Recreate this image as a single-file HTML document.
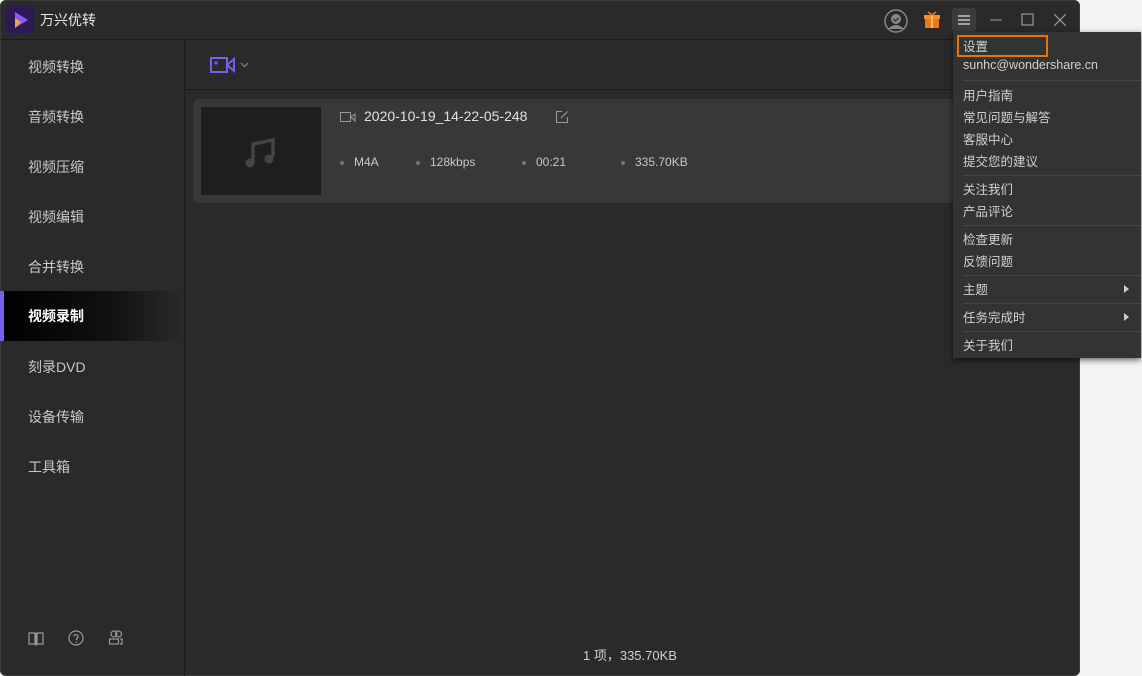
<!DOCTYPE html>
<html><head><meta charset="utf-8"><style>
*{margin:0;padding:0;box-sizing:border-box}
body{width:1142px;height:676px;background:#f4f4f4;font-family:"Liberation Sans","Noto Sans CJK SC",sans-serif;position:relative;overflow:hidden}
.win{position:absolute;left:0;top:0;width:1080px;height:676px;background:#2a2a2a;border-radius:6px;box-shadow:0 0 0 1px #3a3a3a inset;overflow:hidden}
.title{position:absolute;left:0;top:0;width:1080px;height:40px;border-bottom:1px solid #1c1c1c}
.logo{position:absolute;left:6px;top:6px;width:28px;height:28px;border-radius:6px;background:#2d1a55}
.apptitle{position:absolute;left:40px;top:10px;color:#e8e8e8;font-size:14px}
.side{position:absolute;left:0;top:40px;width:185px;height:636px;border-right:1px solid #1c1c1c}
.item{position:absolute;left:0;width:184px;height:50px;line-height:50px;padding-left:28px;color:#c8c8c8;font-size:14px}
.item.act{background:linear-gradient(90deg,#000 0%,#111 60%,#2a2a2a 100%);color:#fff;font-weight:bold}
.item.act:before{content:"";position:absolute;left:0;top:0;width:4px;height:50px;background:#7b5cf0}
.tool{position:absolute;left:185px;top:40px;width:895px;height:50px;border-bottom:1px solid #1c1c1c}
.card{position:absolute;left:193px;top:99px;width:900px;height:104px;background:#383838;border-radius:6px}
.thumb{position:absolute;left:8px;top:8px;width:120px;height:88px;background:#1e1e1e}
.fn{position:absolute;left:171px;top:9px;color:#e0e0e0;font-size:14px}
.meta{position:absolute;top:56px;color:#c8c8c8;font-size:12px}
.meta:before{content:"";position:absolute;left:-14px;top:6px;width:4px;height:4px;border-radius:2px;background:#777}
.status{position:absolute;left:583px;top:647px;color:#d0d0d0;font-size:13px}
.menu{position:absolute;left:953px;top:32px;width:188px;height:326px;background:#333;box-shadow:0 2px 6px rgba(0,0,0,.6)}
.mi{position:absolute;left:10px;color:#d0d0d0;font-size:12.5px}
.sep{position:absolute;left:10px;width:178px;height:1px;background:#454545}
.arr{position:absolute;left:171px;width:0;height:0;border-left:5px solid #ccc;border-top:4px solid transparent;border-bottom:4px solid transparent}
</style></head><body>
<div class="win">
 <div class="title">
  <div class="logo"><svg width="28" height="28"><path d="M9 6 L22 14 L9 22 Z" fill="#8a5cf6"/><path d="M9 12 L15 16 L9 22 Z" fill="#f5a340"/></svg></div>
  <div class="apptitle">万兴优转</div>
  <svg style="position:absolute;left:884px;top:9px" width="24" height="24"><circle cx="12" cy="12" r="11" fill="none" stroke="#888" stroke-width="1.5"/><circle cx="12" cy="10" r="5" fill="#888"/><path d="M4 20 Q12 12 20 20" fill="#888"/><path d="M9.5 10 l2 2 l3-3" stroke="#2a2a2a" stroke-width="1.3" fill="none"/></svg>
  <svg style="position:absolute;left:924px;top:11px" width="16" height="18"><rect x="1" y="6" width="14" height="11" fill="#f07818"/><rect x="0" y="4" width="16" height="4" fill="#f59030"/><rect x="7" y="4" width="2" height="13" fill="#ffc040"/><path d="M4 1 L8 4 L12 1" stroke="#f07818" stroke-width="1.5" fill="none"/></svg>
  <div style="position:absolute;left:952px;top:8px;width:24px;height:24px;background:#3c3c3c;border-radius:3px"></div>
  <svg style="position:absolute;left:957px;top:13px" width="14" height="14"><path d="M1 3h12M1 7h12M1 11h12" stroke="#ddd" stroke-width="1.3"/></svg>
  <svg style="position:absolute;left:990px;top:14px" width="12" height="12"><path d="M0 6h12" stroke="#999" stroke-width="1"/></svg>
  <svg style="position:absolute;left:1021px;top:13px" width="13" height="13"><rect x="1" y="1" width="11" height="11" fill="none" stroke="#999" stroke-width="1.2"/></svg>
  <svg style="position:absolute;left:1054px;top:14px" width="12" height="12"><path d="M0 0L12 12M12 0L0 12" stroke="#999" stroke-width="1.2"/></svg>
 </div>
 <div class="side">
  <div class="item" style="top:2px">视频转换</div>
  <div class="item" style="top:52px">音频转换</div>
  <div class="item" style="top:102px">视频压缩</div>
  <div class="item" style="top:152px">视频编辑</div>
  <div class="item" style="top:202px">合并转换</div>
  <div class="item act" style="top:251px">视频录制</div>
  <div class="item" style="top:302px">刻录DVD</div>
  <div class="item" style="top:352px">设备传输</div>
  <div class="item" style="top:402px">工具箱</div>
  <svg style="position:absolute;left:28px;top:591px" width="16" height="16"><path d="M1 2h6v11H1zM9 2h6v11H9zM8 2v13" fill="none" stroke="#999" stroke-width="1.2"/></svg>
  <svg style="position:absolute;left:68px;top:590px" width="16" height="16"><circle cx="8" cy="8" r="7" fill="none" stroke="#999" stroke-width="1.2"/><path d="M6 6.5a2 2 0 1 1 2.5 2v1.5" fill="none" stroke="#999" stroke-width="1.2"/><circle cx="8.5" cy="12" r=".8" fill="#999"/></svg>
  <svg style="position:absolute;left:108px;top:590px" width="16" height="16"><circle cx="6" cy="4" r="3" fill="none" stroke="#999" stroke-width="1.2"/><circle cx="10.5" cy="4" r="3" fill="none" stroke="#999" stroke-width="1.2"/><rect x="1.5" y="9" width="9" height="5" fill="none" stroke="#999" stroke-width="1.2"/><path d="M12 9h2v5h-2" fill="none" stroke="#999" stroke-width="1.2"/></svg>
 </div>
 <div class="tool">
  <svg style="position:absolute;left:25px;top:16px" width="26" height="18"><rect x="1" y="2" width="16" height="14" fill="none" stroke="#7b5cf0" stroke-width="2"/><circle cx="6" cy="7" r="1.6" fill="#7b5cf0"/><path d="M17 9 L24 3 V15 Z" fill="none" stroke="#7b5cf0" stroke-width="2"/></svg>
  <svg style="position:absolute;left:55px;top:22px" width="9" height="6"><path d="M1 1l3.5 3.5L8 1" fill="none" stroke="#888" stroke-width="1.2"/></svg>
 </div>
 <div class="card">
  <div class="thumb"><svg style="position:absolute;left:42px;top:28px" width="36" height="36"><path d="M10 27V9l20-4v17" fill="none" stroke="#444" stroke-width="3.5"/><circle cx="7" cy="28" r="4.5" fill="#444"/><circle cx="26" cy="24" r="4.5" fill="#444"/></svg></div>
  <svg style="position:absolute;left:147px;top:12px" width="16" height="12"><rect x=".5" y="1.5" width="10" height="9" fill="none" stroke="#999"/><path d="M11 6l4-3v7z" fill="none" stroke="#999"/></svg>
  <div class="fn">2020-10-19_14-22-05-248</div>
  <svg style="position:absolute;left:362px;top:11px" width="14" height="14"><path d="M7 1.5H1.5v11h11V7M6 8l6.5-6.5" fill="none" stroke="#999" stroke-width="1.1"/></svg>
  <div class="meta" style="left:161px">M4A</div>
  <div class="meta" style="left:237px">128kbps</div>
  <div class="meta" style="left:343px">00:21</div>
  <div class="meta" style="left:442px">335.70KB</div>
 </div>
 <div class="status" style="top:645px">1 项，335.70KB</div>
</div>
<div class="menu">
 <div style="position:absolute;left:4px;top:3px;width:91px;height:22px;border:2px solid #e8720c"></div>
 <div class="mi" style="top:4px">设置</div>
 <div class="mi" style="top:26px">sunhc@wondershare.cn</div>
 <div class="sep" style="top:48px"></div>
 <div class="mi" style="top:53px">用户指南</div>
 <div class="mi" style="top:75px">常见问题与解答</div>
 <div class="mi" style="top:97px">客服中心</div>
 <div class="mi" style="top:119px">提交您的建议</div>
 <div class="sep" style="top:143px"></div>
 <div class="mi" style="top:147px">关注我们</div>
 <div class="mi" style="top:169px">产品评论</div>
 <div class="sep" style="top:193px"></div>
 <div class="mi" style="top:197px">检查更新</div>
 <div class="mi" style="top:219px">反馈问题</div>
 <div class="sep" style="top:243px"></div>
 <div class="mi" style="top:247px">主题</div><div class="arr" style="top:253px"></div>
 <div class="sep" style="top:271px"></div>
 <div class="mi" style="top:275px">任务完成时</div><div class="arr" style="top:281px"></div>
 <div class="sep" style="top:299px"></div>
 <div class="mi" style="top:303px">关于我们</div>
</div>
</body></html>
